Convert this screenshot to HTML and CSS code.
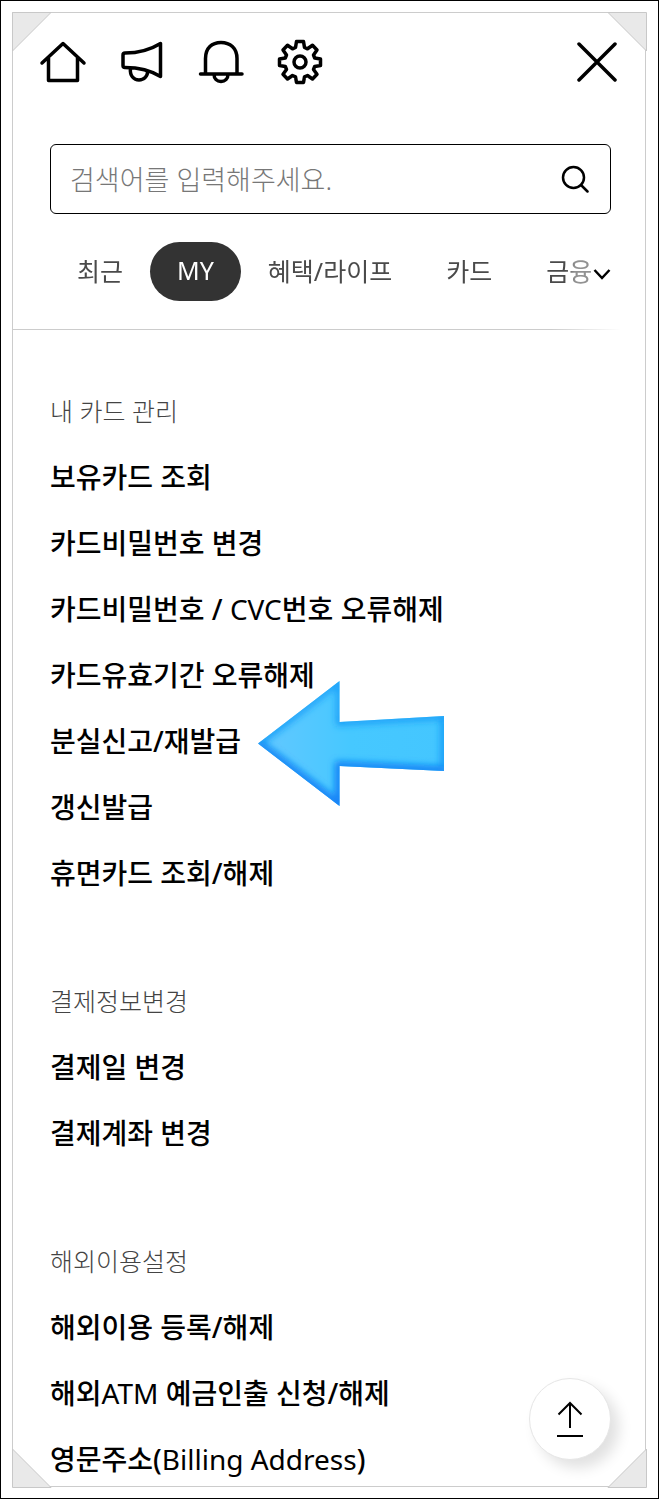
FILE: index.html
```html
<!DOCTYPE html>
<html lang="ko">
<head>
<meta charset="utf-8">
<meta name="viewport" content="width=device-width, initial-scale=1">
<title>전체 메뉴</title>
<link rel="stylesheet" href="styles.css">
</head>
<body>
<div class="page">
<div class="frame">
  <svg class="corner corner-tl" viewBox="0 0 40 40" aria-hidden="true"><path d="M.5.5H39L.5 39Z"/></svg>
  <svg class="corner corner-tr" viewBox="0 0 40 40" aria-hidden="true"><path d="M.5.5H39L.5 39Z"/></svg>
  <svg class="corner corner-bl" viewBox="0 0 40 40" aria-hidden="true"><path d="M.5.5H39L.5 39Z"/></svg>
  <svg class="corner corner-br" viewBox="0 0 40 40" aria-hidden="true"><path d="M.5.5H39L.5 39Z"/></svg>

  <header class="topbar">
    <nav class="shortcuts" aria-label="바로가기">
      <a class="icon-link" href="#home" aria-label="홈"><svg class="icon" viewBox="0 0 48 48" aria-hidden="true"><path d="M3 25 24 5.500 45 25M9.500 20V42.500H38.500V20"/></svg></a>
      <a class="icon-link" href="#notice" aria-label="공지"><svg class="icon" viewBox="0 0 48 48" aria-hidden="true"><path d="M5 17Q5 15 7 15C20 15 32 12 42.500 5.500V38.500C32 32 20 29.500 7 29.500Q5 29.500 5 27.500ZM12.500 30C11.500 38 16 42 21 42S30 38 29.500 33"/></svg></a>
      <a class="icon-link" href="#alarm" aria-label="알림"><svg class="icon" viewBox="0 0 48 48" aria-hidden="true"><path d="M3.500 36H45M8.500 36V20.500C8.500 10 15 4.500 24 4.500S40 10 40 20.500V36M17 36C17 41 20 43.500 24 43.500S31 41 31 36"/></svg></a>
      <a class="icon-link" href="#settings" aria-label="설정"><svg class="icon" viewBox="0 0 48 48" aria-hidden="true"><circle cx="24" cy="24" r="6"/><path d="M20.500 3.500H27.500L28.500 9.500 31.500 10.800 36.500 7.300 41 12 37.500 17 38.700 20 44.500 21V27.500L38.700 28.500 37.500 31.500 41 36.300 36.500 41 31.500 37.500 28.500 38.800 27.500 44.500H20.500L19.500 38.800 16.500 37.500 11.500 41 7 36.300 10.500 31.500 9.300 28.500 3.500 27.500V21L9.300 20 10.500 17 7 12 11.500 7.300 16.500 10.800 19.500 9.500Z"/></svg></a>
    </nav>
    <button class="close" type="button" aria-label="닫기"><svg class="icon icon-close" viewBox="0 0 40 40" aria-hidden="true"><path d="M2 2 38 38M38 2 2 38"/></svg></button>
  </header>

  <form class="search" role="search">
    <input class="search-input" type="text" aria-label="검색어" placeholder="검색어를 입력해주세요.">
    <button class="search-button" type="submit" aria-label="검색"><svg class="icon-search" viewBox="0 0 28 28" aria-hidden="true"><circle cx="12.500" cy="12.500" r="10.500"/><path d="m20 20 6.500 6.500"/></svg></button>
  </form>

  <div class="tabs">
    <div class="tab-list">
      <button class="tab" type="button">최근</button>
      <button class="tab tab-active" type="button" aria-current="true">MY</button>
      <button class="tab" type="button">혜택/라이프</button>
      <button class="tab" type="button">카드</button>
      <button class="tab" type="button">금융</button>
    </div>
    <button class="more" type="button" aria-label="더보기"><svg class="icon-more" viewBox="0 0 18 12" aria-hidden="true"><path d="m1.500 2 7.500 8 7.500-8"/></svg></button>
  </div>
  <div class="divider"></div>

  <main class="menu">
    <section class="group">
      <h2 class="group-title">내 카드 관리</h2>
      <ul class="group-list">
        <li><a class="item" href="#cards">보유카드 조회</a></li>
        <li><a class="item" href="#pin">카드비밀번호 변경</a></li>
        <li><a class="item" href="#cvc">카드비밀번호 / <span class="latin">CVC</span>번호 오류해제</a></li>
        <li><a class="item" href="#expiry">카드유효기간 오류해제</a></li>
        <li class="marked"><a class="item" href="#lost">분실신고/재발급</a>
          <svg class="pointer" viewBox="0 0 188 128" aria-hidden="true">
            <defs>
              <linearGradient id="fill" x1="0" y1="0" x2="1" y2="0"><stop offset="0" stop-color="#64c8ff"/><stop offset=".5" stop-color="#46c8ff"/><stop offset="1" stop-color="#44c6ff"/></linearGradient>
              <linearGradient id="edge" x1="0" y1="0" x2="0" y2="1"><stop offset="0" stop-color="#1ca2fa"/><stop offset=".5" stop-color="#189cf6"/><stop offset="1" stop-color="#1484fa"/></linearGradient>
              <clipPath id="shape"><path d="M1 63.500 82.500 1V42L187 36V91L82.500 86V126Z"/></clipPath>
              <filter id="soft" x="-20%" y="-20%" width="140%" height="140%"><feGaussianBlur stdDeviation="3.500"/></filter>
            </defs>
            <g clip-path="url(#shape)">
              <path fill="url(#fill)" d="M0 0H188V128H0Z"/>
              <path fill="none" stroke="url(#edge)" stroke-width="7" filter="url(#soft)" d="M1 63.500 82.500 1V42L187 36V91L82.500 86V126Z"/>
              <path fill="none" stroke="#167ff5" stroke-width="9" stroke-opacity=".6" filter="url(#soft)" d="M1 64 82.500 126V86L187 91"/>
            </g>
          </svg>
        </li>
        <li><a class="item" href="#renew">갱신발급</a></li>
        <li><a class="item" href="#dormant">휴면카드 조회/해제</a></li>
      </ul>
    </section>
    <section class="group">
      <h2 class="group-title">결제정보변경</h2>
      <ul class="group-list">
        <li><a class="item" href="#payday">결제일 변경</a></li>
        <li><a class="item" href="#account">결제계좌 변경</a></li>
      </ul>
    </section>
    <section class="group">
      <h2 class="group-title">해외이용설정</h2>
      <ul class="group-list">
        <li><a class="item" href="#overseas">해외이용 등록/해제</a></li>
        <li><a class="item" href="#atm">해외<span class="latin">ATM</span> 예금인출 신청/해제</a></li>
        <li><a class="item" href="#billing">영문주소(<span class="latin">Billing Address</span>)</a></li>
      </ul>
    </section>
  </main>

  <button class="to-top" type="button" aria-label="맨 위로"><svg class="icon-top" viewBox="0 0 28 38" aria-hidden="true"><path d="M14 28V3M2.500 14.500 14 3 25.500 14.500M1 36H27"/></svg></button>
</div>
</div>
</body>
</html>
```

FILE: styles.css
```css
* {
  box-sizing: border-box;
}

body {
  margin: 0;
  background: #fff;
  color: #000;
  font-family: "Noto Sans", "Noto Sans CJK KR", sans-serif;
}

button {
  padding: 0;
  border: 0;
  background: none;
  color: inherit;
  font: inherit;
  cursor: pointer;
}

a {
  color: inherit;
  text-decoration: none;
}

svg {
  display: block;
}

.page {
  min-height: 100vh;
  padding: 11px 12px 11px 11px;
  border: 1px solid #000;
}

.frame {
  position: relative;
  border: 1px solid #ccc;
}

.corner {
  position: absolute;
  width: 40px;
  height: 40px;
  fill: #e9e9e9;
  stroke: #c8c8c8;
}

.corner-tl {
  top: -1px;
  left: -1px;
}

.corner-tr {
  top: -1px;
  right: -2px;
  transform: scaleX(-1);
}

.corner-bl {
  bottom: -2px;
  left: -1px;
  transform: scaleY(-1);
}

.corner-br {
  right: -2px;
  bottom: -2px;
  transform: scale(-1);
}

.topbar {
  display: flex;
  align-items: center;
  justify-content: space-between;
  padding: 25px 28px 0 26px;
}

.shortcuts {
  display: flex;
  gap: 31px;
}

.icon {
  width: 48px;
  height: 48px;
  fill: none;
  stroke: #000;
  stroke-width: 3.5;
  stroke-linecap: round;
  stroke-linejoin: round;
}

.icon-close {
  width: 40px;
  height: 40px;
}

.search {
  display: flex;
  align-items: center;
  height: 70px;
  margin: 58px 34px 0 37px;
  padding: 0 21px 0 19px;
  border: 1px solid #000;
  border-radius: 6px;
}

.search-input {
  flex: 1;
  min-width: 0;
  padding: 0;
  border: 0;
  outline: 0;
  background: none;
  font-family: inherit;
  font-size: 27px;
  font-weight: 300;
}

.search-input::placeholder {
  color: #777;
  opacity: 1;
}

.icon-search {
  width: 28px;
  height: 28px;
  fill: none;
  stroke: #000;
  stroke-width: 2.5;
  stroke-linecap: round;
}

.tabs {
  display: flex;
  align-items: center;
  margin: 28px 34px 0 37px;
}

.tab-list {
  display: flex;
  flex: 1;
  min-width: 0;
  overflow: hidden;
  -webkit-mask-image: linear-gradient(to left, rgba(0, 0, 0, .6) 18px, #000 28px);
  mask-image: linear-gradient(to left, rgba(0, 0, 0, .6) 18px, #000 28px);
}

.tab {
  flex: none;
  height: 59px;
  padding: 0 27px 3px;
  border-radius: 30px;
  color: #4a4a4a;
  font-size: 25px;
  white-space: nowrap;
}

.tab-active {
  background: #333;
  color: #fff;
}

.icon-more {
  width: 18px;
  height: 12px;
  fill: none;
  stroke: #000;
  stroke-width: 2.5;
}

.more {
  padding-top: 4px;
}

.divider {
  height: 1px;
  margin: 28px 24px 0 0;
  background: linear-gradient(to left, transparent, #ccc 70px);
}

.menu {
  display: grid;
  gap: 86px;
  padding: 60px 37px 6px;
}

.group {
  display: grid;
  gap: 24px;
}

.group-title {
  margin: 0;
  color: #444;
  font-size: 25px;
  font-weight: 300;
  line-height: 42px;
}

.group-list {
  display: grid;
  gap: 24px;
  margin: 0;
  padding: 0;
  list-style: none;
}

.item {
  display: block;
  font-size: 28px;
  font-weight: 500;
  line-height: 42px;
}

.latin {
  font-weight: 400;
}

.marked {
  position: relative;
}

.pointer {
  position: absolute;
  top: -40px;
  left: 207px;
  width: 188px;
  height: 128px;
}

.to-top {
  position: absolute;
  right: 34px;
  bottom: 26px;
  display: grid;
  place-items: center;
  width: 82px;
  height: 82px;
  border: 1px solid #e6e6e6;
  border-radius: 50%;
  background: #fff;
  box-shadow: 8px 8px 14px rgba(0, 0, 0, .12);
}

.icon-top {
  width: 28px;
  height: 38px;
  fill: none;
  stroke: #000;
  stroke-width: 2;
}
```
